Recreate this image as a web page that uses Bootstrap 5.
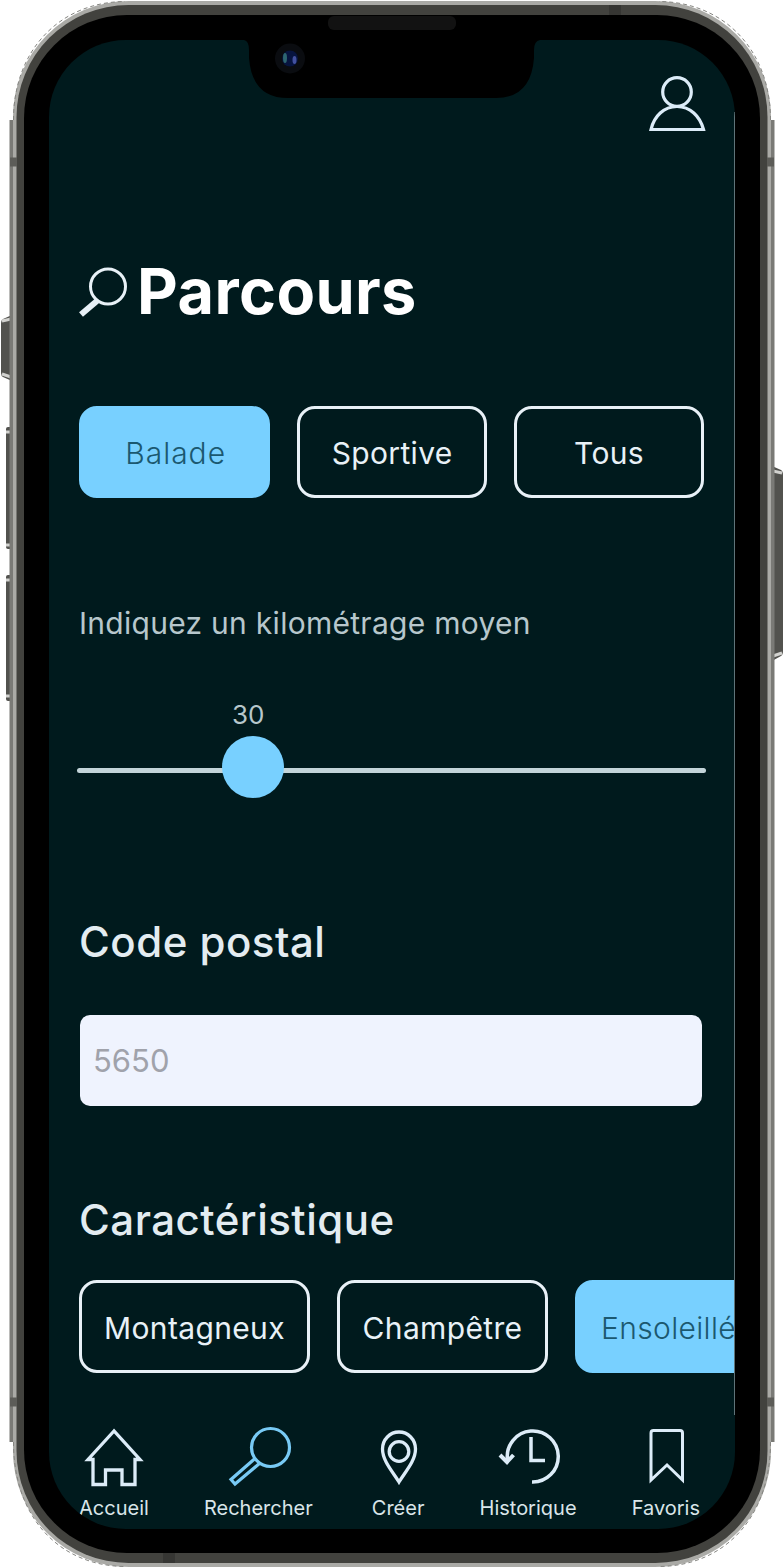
<!DOCTYPE html>
<html lang="fr">
<head>
<meta charset="utf-8">
<meta name="viewport" content="width=device-width, initial-scale=1">
<title>Parcours</title>
<link href="https://cdn.jsdelivr.net/npm/bootstrap@5.3.0/dist/css/bootstrap.min.css" rel="stylesheet">
<style>
body{background:#fff;font-family:Inter,"Liberation Sans",sans-serif;overflow:hidden}
.phone{width:784px;height:1568px;padding:40px 49px 39px}
.shell{inset:0;width:784px;height:1568px}
.screen{height:1489px;border-radius:77px;background:#001a1d;color:#e3ecf1;overflow:hidden}
.notch{left:244px;top:39px}
.edge{right:0;top:72px;width:1px;height:1303px;background:#5f7378}
.content-pad{padding:0 31px 0 30px}
.topbar{height:92px;padding-top:34px}
.profile{margin-right:-2px}
.title-row{height:70px;margin-top:126px;gap:9px}
.title-text{font-size:63px;line-height:67px;font-weight:700;color:#fff;letter-spacing:.4px}
.filters{margin-top:78px;gap:27px}
.chip{height:92px;border:3px solid #e8f1f7;border-radius:18px;color:#e8f1f7;font-size:30px;line-height:1;padding:2px 0 0;font-family:inherit;letter-spacing:.35px}
.chip.on{background:#78d0ff;border-color:#78d0ff;color:#1b5870;font-weight:300}
.filters .on{letter-spacing:1px;padding-left:2px}
.distance{font-size:30px;line-height:40px;margin-top:105px;color:#b7c7cc;letter-spacing:.28px}
.slider{height:120px;margin-top:52px}
.slider-value{left:153px;top:2px;font-size:26px;line-height:36px;color:#b7c7cc}
.slider-line{left:-2px;right:-2px;top:73px;height:5px;border-radius:3px;background:#c3d4d9}
.slider-knob{left:143px;top:41px;width:62px;height:62px;border-radius:50%;background:#78d0ff}
.section-title{font-size:42px;line-height:50px;font-weight:500;margin:0;letter-spacing:.5px}
.title-postal{margin-top:102px}
.title-traits{margin-top:89px}
.postal{margin:48px 2px 0 1px;width:622px;height:91px;border:0;border-radius:10px;background:#eff3fe;font-size:31px;padding:0 13px}
.postal::placeholder{color:#a0a2ab}
.traits{margin-top:35px;gap:27px;padding-left:30px}
.traits .chip{height:93px}
.traits .on{padding-left:23px;text-align:left}
.tabs{margin-top:52px;height:100px;padding:0 35px 0 30px;color:#d9e5e9}
.tabs a{color:inherit;text-decoration:none;font-size:20px;line-height:24px;display:flex;flex-direction:column;align-items:center}
.tabs svg{height:64px;margin-bottom:7px;overflow:visible}
.tabs .pin{margin-left:4px}
</style>
</head>
<body>
<div class="phone position-relative">
  <svg class="shell position-absolute" viewBox="0 0 784 1568" fill="none">
    <g fill="#52524e">
      <path d="M12 315L3 319Q1 320 1 323V373Q1 376 3 377L12 381Z"/>
      <rect x="6" y="427" width="10" height="122" rx="2"/>
      <rect x="6" y="575" width="10" height="126" rx="2"/>
      <path d="M772 466L781 470Q783 471 783 475V651Q783 655 781 656L772 661Z"/>
    </g>
    <path d="M2 321L11 319M2 374L11 377M6 432H12M6 545H12M6 580H12M6 696H12M773 471L782 473M773 656L782 653" stroke="#d2d2cf" stroke-width="3"/>
    <path d="M12 120V1442M772 120V1442" stroke="#7a7a76" stroke-width="5"/>
    <rect x="13" y="1" width="758" height="1566" rx="116" fill="#aaaaa6"/>
    <path d="M13.500 120C13.500 50 60 2 125 1.500M770.500 120C770.500 50 724 2 659 1.500M13.500 1442C13.500 1518 60 1566 125 1566.500M770.500 1442C770.500 1518 724 1566 659 1566.500" stroke="#858581" stroke-dasharray="4 3"/>
    <rect x="16.500" y="5" width="751" height="1558" rx="112" fill="#42423e"/>
    <rect x="24" y="15" width="736" height="1538" rx="103" fill="#000"/>
    <path d="M10 162H17M10 1402H17M767 162H774M767 1402H774" stroke="#5c5c58" stroke-width="9"/>
    <path d="M615 5V15M169 1553V1563" stroke="#363633" stroke-width="12"/>
    <rect x="328" y="16" width="128" height="14" rx="6" fill="#121212"/>
  </svg>
  <main class="screen position-relative">
    <div class="edge position-absolute"></div>
    <header class="content-pad topbar d-flex justify-content-end">
      <svg class="profile" width="58" height="58" viewBox="648 73 58 58" fill="none" stroke="#dcecf8" stroke-width="3.200" aria-label="Profil"><circle cx="677" cy="91" r="14.300"/><path d="M651 128.500H703.500C700 115 690 105.500 677 105.500S654 115 651 128.500Z"/></svg>
    </header>
    <section class="content-pad">
      <div class="title-row d-flex">
        <svg width="49" height="70" viewBox="79 257 49 70" fill="none" stroke="#e8f1f7"><circle cx="108" cy="285.500" r="17.500" stroke-width="3"/><path d="M97.500 299.500L81 313.500" stroke-width="6"/></svg>
        <h1 class="title-text m-0">Parcours</h1>
      </div>
      <div class="filters d-flex">
        <button class="chip on flex-fill w-100">Balade</button>
        <button class="chip btn flex-fill w-100">Sportive</button>
        <button class="chip btn flex-fill w-100">Tous</button>
      </div>
      <div class="distance text-nowrap">Indiquez un kilométrage moyen</div>
      <div class="slider position-relative">
        <span class="slider-value position-absolute">30</span>
        <div class="slider-line position-absolute"></div>
        <div class="slider-knob position-absolute"></div>
      </div>
      <h2 class="section-title title-postal">Code postal</h2>
      <input class="postal d-block" placeholder="5650" aria-label="Code postal">
      <h2 class="section-title title-traits">Caractéristique</h2>
    </section>
    <div class="traits d-flex">
      <button class="chip btn flex-shrink-0" style="width:231px">Montagneux</button>
      <button class="chip btn flex-shrink-0" style="width:211px">Champêtre</button>
      <button class="chip on flex-shrink-0" style="width:195px">Ensoleillé</button>
    </div>
    <nav class="tabs d-flex justify-content-between">
      <a href="#"><svg width="60" viewBox="84 1425 60 64" fill="none" stroke="#dcecf8" stroke-width="3.300"><path d="M114 1431L88 1459.500H93V1484.500H105.500V1470H122V1484.500H135V1459.500H140Z"/></svg><span>Accueil</span></a>
      <a href="#"><svg width="64" viewBox="227 1425 64 64" fill="none" stroke="#78caf5" stroke-width="3.200"><circle cx="271.500" cy="1447.500" r="19"/><path d="M256 1458.500L232 1479.500L236 1484L261 1463"/></svg><span>Rechercher</span></a>
      <a href="#" class="pin"><svg width="40" viewBox="379 1425 40 64" fill="none" stroke="#dcecf8" stroke-width="3.300"><path d="M400 1482C394 1472 383.500 1461 383.500 1449A16.500 17 0 0 1 416.500 1449C416.500 1461 406 1472 400 1482Z"/><circle cx="400" cy="1451.500" r="9.800"/></svg><span>Créer</span></a>
      <a href="#"><svg width="64" viewBox="497 1425 64 64" fill="none" stroke="#dcecf8" stroke-width="3.500"><path d="M508.500 1460A25.500 25.500 0 1 1 533 1482M532 1437V1460.500H546"/><path d="M501 1455L508 1462L514.500 1455" stroke-width="4"/></svg><span>Historique</span></a>
      <a href="#"><svg width="40" viewBox="646 1425 40 64" fill="none" stroke="#dcecf8" stroke-width="3"><path d="M651 1480V1433Q651 1430.500 653.500 1430.500H680Q682.500 1430.500 682.500 1433V1480L667 1465Z"/></svg><span>Favoris</span></a>
    </nav>
  </main>
  <svg class="notch position-absolute" width="296" height="60" viewBox="244 39 296 60"><path d="M244 39V40Q249 41 249 50V58Q252 98 288 98H496Q531 98 534 58V50Q534 41 540 40V39Z" fill="#000"/><circle cx="290" cy="58.500" r="15" fill="#0a0c10"/><circle cx="290" cy="58.500" r="8" fill="#07143f"/><ellipse cx="285" cy="58" rx="2" ry="5" fill="#2d6570"/><ellipse cx="294.500" cy="60" rx="2" ry="4" fill="#4351a0"/></svg>
</div>
<script src="https://cdn.jsdelivr.net/npm/bootstrap@5.3.0/dist/js/bootstrap.bundle.min.js"></script>
</body>
</html>
